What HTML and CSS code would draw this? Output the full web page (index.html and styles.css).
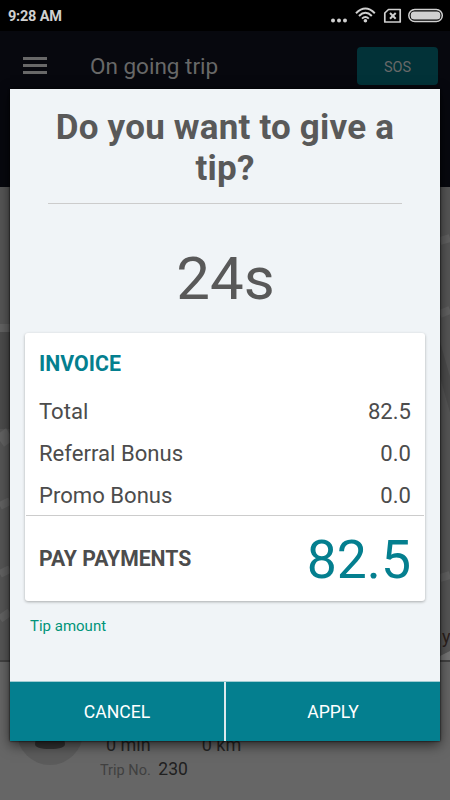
FILE: index.html
```html
<!DOCTYPE html>
<html lang="en">
<head>
  <meta charset="UTF-8">
  <meta name="viewport" content="width=device-width, initial-scale=1.0">
  <title>On going trip</title>
  <link rel="stylesheet" href="styles.css">
</head>
<body>
  <div class="screen">
    <div class="status-bar">
      <span class="time">9:28 AM</span>
      <svg class="status-icons" width="114" height="20" viewBox="0 0 114 20">
        <g fill="#d0d0d0">
          <circle cx="3" cy="14.5" r="2"/>
          <circle cx="9" cy="14.5" r="2"/>
          <circle cx="15" cy="14.5" r="2"/>
          <circle cx="35.4" cy="14.7" r="1.8"/>
        </g>
        <g fill="none" stroke="#d0d0d0" stroke-width="2">
          <path d="M26 7.200q9.400-9.400 18.800 0M29 10q6.400-6.400 12.800 0M32 12.600q3.400-3.400 6.800 0"/>
          <path d="M58.500 3.500H70.200V16H54.800V7Z" stroke-width="1.700" stroke-linejoin="round"/>
          <path d="M60 7l5.700 5.700M65.700 7L60 12.700" stroke-width="2"/>
          <rect x="78.800" y="3.500" width="33.500" height="12" rx="6" stroke-width="1.500"/>
        </g>
        <rect x="80.700" y="5.400" width="29.700" height="8.200" rx="3.500" fill="#d0d0d0"/>
      </svg>
    </div>
    <div class="header">
      <div class="menu"><i></i><i></i><i></i></div>
      <span class="header-title">On going trip</span>
      <span class="sos">SOS</span>
    </div>
    <div class="map">
      <svg width="450" height="473" viewBox="0 0 450 473">
        <path d="M0 145H10V242H0ZM440 155L450 190V225L440 190Z" fill="#4c4c4c"/>
        <g stroke="#626262" fill="none" stroke-width="8">
          <path d="M0 141H10M0 319L10 314M0 387L10 382M0 432L10 425M440 54L450 51M440 127L450 123M440 391L450 388"/>
          <path d="M0 254L10 247" stroke-width="14"/>
        </g>
        <path d="M440 469L450 464V473H440Z" fill="#777"/>
      </svg>
      <span class="place">y</span>
    </div>
    <div class="trip">
      <svg class="avatar" width="66" height="66" viewBox="0 0 66 66">
        <circle cx="33" cy="33" r="33" fill="#5b5b5b"/>
        <circle cx="33" cy="22" r="12" fill="#333"/>
        <path d="M18 45q0-9 15-9t15 9q0 5-15 5t-15-5Z" fill="#333"/>
      </svg>
      <div class="trip-info">
        <div class="trip-stats"><span>0 min</span><span>0 km</span></div>
        <div class="trip-no">Trip No. <b>230</b></div>
      </div>
    </div>

    <div class="dialog">
      <h1 class="question">Do you want to give a tip?</h1>
      <div class="timer">24s</div>
      <div class="invoice">
        <h2>INVOICE</h2>
        <div class="row"><span>Total</span><span>82.5</span></div>
        <div class="row"><span>Referral Bonus</span><span>0.0</span></div>
        <div class="row"><span>Promo Bonus</span><span>0.0</span></div>
        <div class="pay"><span>PAY PAYMENTS</span><span class="amount">82.5</span></div>
      </div>
      <div class="tip">Tip amount</div>
      <div class="buttons">
        <button>CANCEL</button>
        <button>APPLY</button>
      </div>
    </div>
  </div>
</body>
</html>
```

FILE: styles.css
```css
* {
  box-sizing: border-box;
}
body {
  margin: 0;
  font-family: Roboto, sans-serif;
  background-color: #666;
}
.screen {
  position: relative;
  width: 450px;
  height: 800px;
  overflow: hidden;
  display: flex;
  flex-direction: column;
}
.status-bar {
  height: 31px;
  padding: 2px 6px 0 8px;
  display: flex;
  align-items: center;
  justify-content: space-between;
  background-color: #000;
}
.time {
  color: #d0d0d0;
  font-size: 14.5px;
  font-weight: 700;
  letter-spacing: -0.2px;
}
.status-icons {
  margin-top: -2px;
}
.header {
  height: 156px;
  padding: 16px 12px 0 23px;
  display: flex;
  align-items: flex-start;
  background-color: #07080e;
  color: #686868;
}
.menu {
  width: 24px;
  height: 17px;
  margin-top: 10px;
  display: flex;
  flex-direction: column;
  justify-content: space-between;
}
.menu i {
  height: 3px;
  background-color: #686868;
}
.header-title {
  flex: 1;
  margin-left: 43px;
  font-size: 22.5px;
  line-height: 39px;
}
.sos {
  width: 81px;
  height: 38px;
  border-radius: 4px;
  background-color: #023238;
  text-align: center;
  font-size: 14.5px;
  line-height: 41px;
}
.map {
  position: relative;
  height: 473px;
  background-color: #565656;
}
.place {
  position: absolute;
  left: 442px;
  top: 439px;
  font-size: 18px;
  color: #2c211c;
}
.trip {
  flex: 1;
  display: flex;
  padding: 37px 17px 0;
  border-top: 2px solid #424242;
  background-color: #666;
}
.trip-info {
  padding: 36px 0 0 17px;
  color: #252525;
}
.trip-stats {
  display: flex;
  gap: 51px;
  padding-left: 6px;
  font-size: 18px;
  line-height: 20px;
}
.trip-no {
  margin-top: 3px;
  font-size: 14.5px;
  line-height: 22px;
  color: #404040;
}
.trip-no b {
  margin-left: 4px;
  font-size: 17.5px;
  font-weight: 400;
  color: #202020;
}
.dialog {
  position: absolute;
  left: 10px;
  top: 89px;
  width: 430px;
  height: 652px;
  display: flex;
  flex-direction: column;
  background-color: #f0f4f7;
  box-shadow: 0 0 2px #000, 0 4px 12px rgba(0, 0, 0, 0.6);
}
.question {
  margin: 0 38px;
  height: 115px;
  padding-top: 18px;
  border-bottom: 1px solid #ccc;
  text-align: center;
  font-size: 35px;
  font-weight: 700;
  line-height: 41px;
  letter-spacing: 0.2px;
  color: #595959;
}
.timer {
  height: 129px;
  padding: 40px 0 0 1px;
  text-align: center;
  font-size: 60px;
  line-height: 70px;
  color: #595959;
}
.invoice {
  height: 268px;
  margin: 0 15px;
  border-radius: 3px;
  background-color: #fff;
  box-shadow: 0 1px 3px rgba(0, 0, 0, 0.3);
  color: #4c4c4c;
}
.invoice h2 {
  margin: 0;
  padding: 18px 14px 13px;
  font-size: 21.3px;
  line-height: 26px;
  color: #047f8f;
}
.row {
  display: flex;
  justify-content: space-between;
  padding: 0 14px;
  font-size: 22.1px;
  line-height: 42px;
  height: 42px;
}
.pay {
  height: 86px;
  margin: -1px 1px 0;
  padding: 0 13px;
  display: flex;
  align-items: center;
  justify-content: space-between;
  border-top: 1px solid #ccc;
  font-size: 21.2px;
  font-weight: 700;
}
.pay .amount {
  padding-top: 1px;
  font-size: 53.5px;
  font-weight: 400;
  color: #047f8f;
}
.tip {
  flex: 1;
  padding: 15px 20px 0;
  font-size: 15px;
  line-height: 20px;
  color: #009479;
}
.buttons {
  height: 60px;
  display: grid;
  grid-template-columns: 214px 214px;
  gap: 2px;
  border-top: 1px solid #9fcdd3;
  background-color: #dce9ed;
}
.buttons button {
  padding: 1px 0 0;
  border: none;
  background-color: #047f8f;
  color: #fff;
  font-family: inherit;
  font-size: 17.6px;
}
```
